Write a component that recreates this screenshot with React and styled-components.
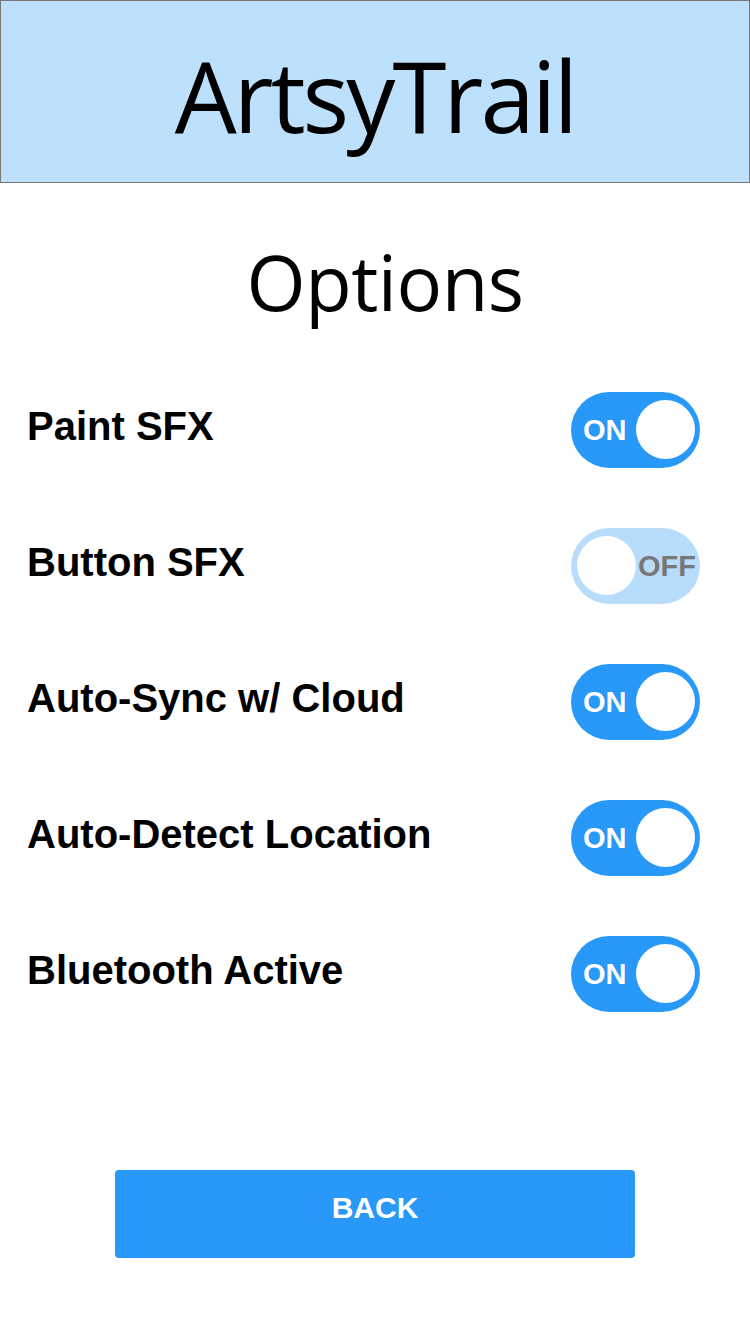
import React from "react";
import styled, { createGlobalStyle } from "styled-components";

const Global = createGlobalStyle`
  html, body { margin: 0; padding: 0; background: #fff; }
  body { width: 750px; height: 1334px; overflow: hidden; }
`;

const Page = styled.div`
  width: 750px;
  height: 1334px;
  display: flex;
  flex-direction: column;
  box-sizing: border-box;
`;

const Header = styled.header`
  height: 183px;
  box-sizing: border-box;
  background: #bde0fd;
  border: 1px solid #777;
  display: flex;
  align-items: center;
  justify-content: center;
`;

const Brand = styled.h1`
  margin: 0;
  font-family: "Open Sans", "Noto Sans", sans-serif;
  font-weight: 400;
  font-size: 98px;
  letter-spacing: -3px;
  color: #000;
  line-height: 1;
  transform: translateY(3px);
`;

const Title = styled.h2`
  margin: 54px 0 0;
  padding-left: 20px;
  text-align: center;
  font-family: "Open Sans", "Noto Sans", sans-serif;
  font-weight: 400;
  font-size: 76px;
  letter-spacing: -0.5px;
  line-height: 90px;
  color: #000;
`;

const List = styled.div`
  display: flex;
  flex-direction: column;
  gap: 60px;
  margin-top: 65px;
  padding: 0 50px 0 27px;
`;

const Row = styled.div`
  display: flex;
  align-items: center;
  justify-content: space-between;
  height: 76px;
`;

const Label = styled.span`
  font-family: "Liberation Sans", Arial, sans-serif;
  font-weight: 700;
  font-size: 40px;
  color: #000;
  transform: translateY(-4px);
`;

const Toggle = styled.div`
  width: 129px;
  height: 76px;
  border-radius: 38px;
  box-sizing: border-box;
  background: ${(p) => (p.$on ? "#2899f9" : "#b8ddfc")};
  display: flex;
  flex-direction: ${(p) => (p.$on ? "row" : "row-reverse")};
  align-items: center;
  justify-content: space-between;
  padding: ${(p) => (p.$on ? "0 5px 0 12px" : "0 4px 0 6px")};
`;

const ToggleText = styled.span`
  font-family: "Liberation Sans", Arial, sans-serif;
  font-weight: 700;
  font-size: 29px;
  color: ${(p) => (p.$on ? "#fff" : "#777")};
`;

const Knob = styled.span`
  width: 59px;
  height: 59px;
  border-radius: 50%;
  background: #fff;
  transform: translateY(-1px);
`;

const Footer = styled.div`
  margin-top: auto;
  padding-bottom: 76px;
  display: flex;
  justify-content: center;
`;

const BackButton = styled.button`
  width: 520px;
  height: 88px;
  border: none;
  border-radius: 4px;
  background: #2899f9;
  color: #fff;
  font-family: "Liberation Sans", Arial, sans-serif;
  font-weight: 700;
  font-size: 30px;
  padding: 0 0 12px;
  cursor: pointer;
`;

const options = [
  { label: "Paint SFX", on: true },
  { label: "Button SFX", on: false },
  { label: "Auto-Sync w/ Cloud", on: true },
  { label: "Auto-Detect Location", on: true },
  { label: "Bluetooth Active", on: true },
];

export default function App() {
  return (
    <>
      <Global />
      <Page>
        <Header>
          <Brand>ArtsyTrail</Brand>
        </Header>
        <Title>Options</Title>
        <List>
          {options.map((o) => (
            <Row key={o.label}>
              <Label>{o.label}</Label>
              <Toggle $on={o.on}>
                <ToggleText $on={o.on}>{o.on ? "ON" : "OFF"}</ToggleText>
                <Knob />
              </Toggle>
            </Row>
          ))}
        </List>
        <Footer>
          <BackButton>BACK</BackButton>
        </Footer>
      </Page>
    </>
  );
}
